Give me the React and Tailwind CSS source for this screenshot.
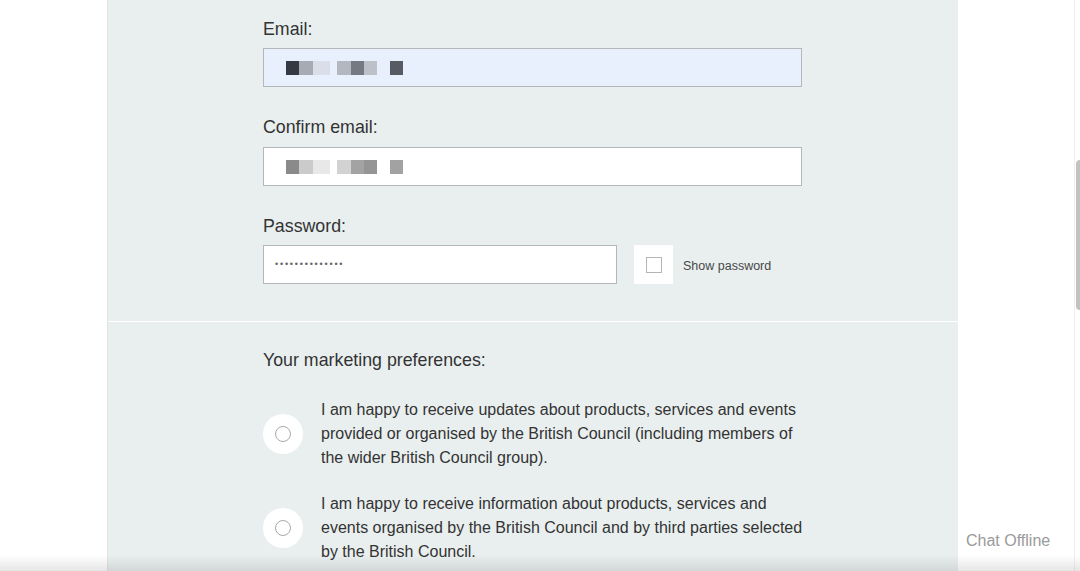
import React from 'react';

const emailBlocks = [
    ['w-[13px]', 'bg-[#353a42]'],
    ['w-[14px]', 'bg-[#a7abb3]'],
    ['w-[17px]', 'bg-[#d9dee8]'],
    ['w-[7px]', 'bg-transparent'],
    ['w-[14px]', 'bg-[#b3b7c0]'],
    ['w-[13px]', 'bg-[#747982]'],
    ['w-[13px]', 'bg-[#bcc0c8]'],
    ['w-[13px]', 'bg-transparent'],
    ['w-[13px]', 'bg-[#565b63]'],
];

const confirmBlocks = [
    ['w-[13px]', 'bg-[#8a8a8a]'],
    ['w-[14px]', 'bg-[#cbcbcb]'],
    ['w-[17px]', 'bg-[#e8e8e8]'],
    ['w-[7px]', 'bg-transparent'],
    ['w-[14px]', 'bg-[#d2d2d2]'],
    ['w-[13px]', 'bg-[#a3a3a3]'],
    ['w-[13px]', 'bg-[#959595]'],
    ['w-[13px]', 'bg-transparent'],
    ['w-[13px]', 'bg-[#a2a2a2]'],
];

const Pixelated = ({ blocks }) => (
    <div className="flex h-[14px] ml-[22px] mt-[1px]">
        {blocks.map(([w, bg], i) => (
            <div key={i} className={`${w} ${bg} h-full`} />
        ))}
    </div>
);

const Label = ({ children }) => (
    <div className="text-[17.8px] leading-[24px] text-[#333]">{children}</div>
);

const Radio = () => (
    <div className="w-[40px] h-[40px] rounded-full bg-white flex items-center justify-center shrink-0">
        <div className="w-[16px] h-[16px] rounded-full border border-[#a9a9a9] bg-white" />
    </div>
);

const Preference = ({ children, className }) => (
    <div className={`flex items-center ${className}`}>
        <Radio />
        <p className="ml-[18px] w-[490px] text-[16px] leading-[24px] text-[#333]">{children}</p>
    </div>
);

export default function App() {
    return (
        <div className="relative h-[571px] w-[1080px] overflow-hidden bg-white" style={{ fontFamily: '"Liberation Sans", Arial, sans-serif' }}>
            <div className="ml-[107px] w-[851px] h-full bg-[#e9efef] border-l border-[#dfe5e5]">
                {/* Account details */}
                <div className="pl-[155px] pt-[17px] pb-[37px]">
                    <Label>Email:</Label>
                    <div className="mt-[7px] w-[539px] h-[39px] bg-[#e8effd] border border-[#b4b7bb] flex items-center">
                        <Pixelated blocks={emailBlocks} />
                    </div>

                    <div className="mt-[28px]">
                        <Label>Confirm email:</Label>
                    </div>
                    <div className="mt-[8px] w-[539px] h-[39px] bg-white border border-[#b4b7bb] flex items-center">
                        <Pixelated blocks={confirmBlocks} />
                    </div>

                    <div className="mt-[28px]">
                        <Label>Password:</Label>
                    </div>
                    <div className="mt-[7px] flex items-center">
                        <div className="w-[354px] h-[39px] bg-white border border-[#b4b7bb] flex items-center pl-[11px] text-[9px] tracking-[1.8px] text-[#666]">
                            ••••••••••••••
                        </div>
                        <div className="ml-[17px] w-[39px] h-[39px] bg-white flex items-center justify-center">
                            <div className="w-[16px] h-[16px] border border-[#b5b5b5] bg-white" />
                        </div>
                        <span className="ml-[10px] mt-[3px] text-[12.5px] text-[#484848]">Show password</span>
                    </div>
                </div>

                <div className="h-px bg-white" />

                {/* Marketing */}
                <div className="pl-[155px] pt-[26px]">
                    <Label>Your marketing preferences:</Label>
                    <Preference className="mt-[26px]">
                        I am happy to receive updates about products, services and events provided or organised by the British Council (including members of the wider British Council group).
                    </Preference>
                    <Preference className="mt-[22px]">
                        I am happy to receive information about products, services and events organised by the British Council and by third parties selected by the British Council.
                    </Preference>
                </div>
            </div>

            {/* Chat widget label */}
            <div className="absolute left-[966px] top-[529px] text-[16px] text-[#9a9a9a]">Chat Offline</div>

            {/* Scrollbar */}
            <div className="absolute right-[5px] top-0 w-px h-full bg-[#efefef]" />
            <div className="absolute right-0 top-[160px] w-[4px] h-[150px] rounded-l bg-[#c2c2c2]" />

            {/* bottom shadow */}
            <div className="absolute left-0 bottom-0 w-full h-[16px] bg-gradient-to-b from-transparent to-black/10" />
        </div>
    );
}
